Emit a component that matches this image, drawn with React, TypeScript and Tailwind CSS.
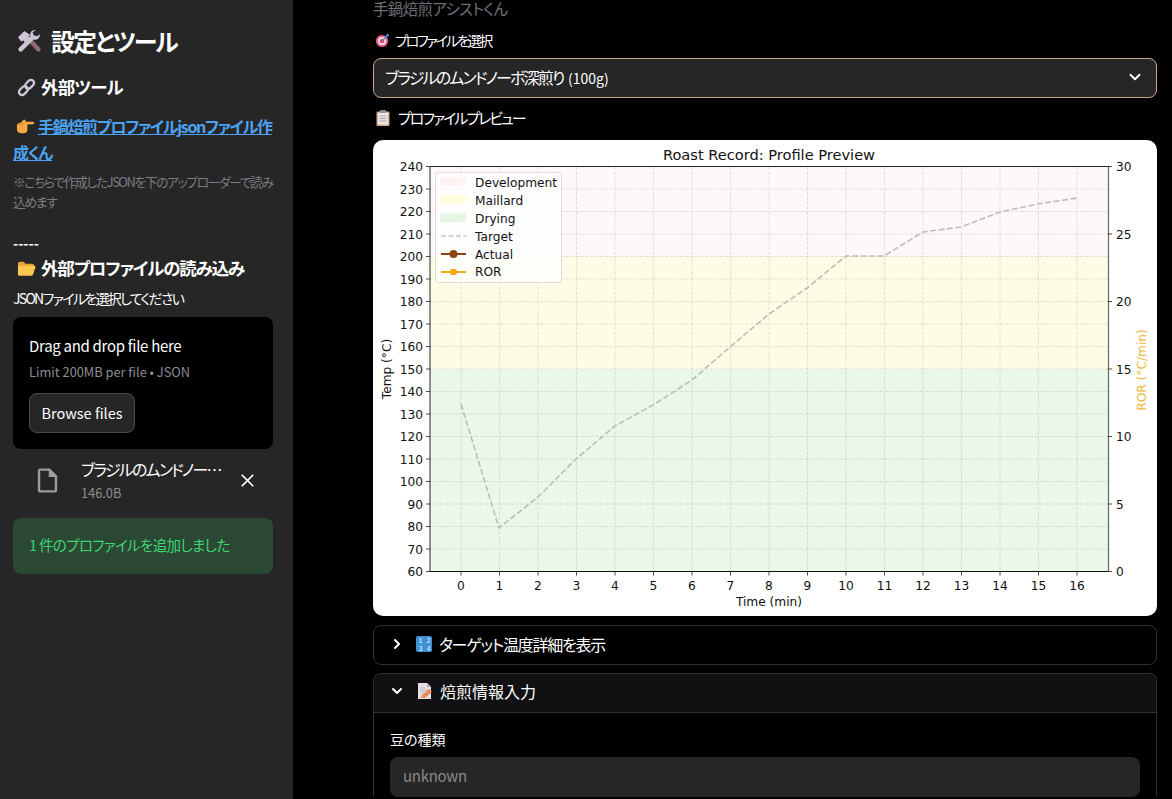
import { ChevronDown, ChevronRight, X } from "lucide-react"

const xTicks = Array.from({ length: 17 }, (_, i) => i)
const tempTicks = Array.from({ length: 19 }, (_, i) => 60 + i * 10)
const rorTicks = [0, 5, 10, 15, 20, 25, 30]

const X0 = 461
const XSTEP = 38.5
const tempY = (t: number) => 571.5 - (t - 60) * 2.25
const rorY = (r: number) => 571.5 - r * 13.5

const target: [number, number][] = [
  [461, 404], [499, 528], [538, 497], [576, 459], [615, 426], [653, 405], [692, 380], [730, 347], [769, 314],
  [807, 288], [846, 256], [884, 256], [923, 232], [961, 227], [1000, 212], [1038, 204], [1077, 198],
]

function ToolsEmoji() {
  return (
    <svg viewBox="0 0 24 24" className="h-[25px] w-[25px]">
      <path d="M9 10l3-3 10 11c1 1 1 2 0 3s-2 1-3 0z" fill="#8e6b74" />
      <path d="M1 8l6-6 6 4-2 1 1 2-4 4-2-2-2 1z" fill="#cdc6d4" />
      <path d="M17 1c-3 0-5 3-4 6L2 18c-1 1-1 2 0 3s2 1 3 0L16 10c3 1 6-1 6-5l-3 2-3-1-1-3 3-2z" fill="#cdc6d4" />
    </svg>
  )
}

function LinkEmoji() {
  return (
    <svg viewBox="0 0 20 20" className="h-[19px] w-[19px]" fill="none" stroke="#cdc6d6" strokeWidth="2.400">
      <rect x="1.500" y="10" width="10.500" height="6.500" rx="3.200" transform="rotate(-45 6.700 13.200)" />
      <rect x="8" y="3.500" width="10.500" height="6.500" rx="3.200" transform="rotate(-45 13.200 6.700)" />
    </svg>
  )
}

function PointEmoji() {
  return (
    <svg viewBox="0 0 20 20" className="h-[19px] w-[19px]">
      <path d="M1 9c0-2 2-3 4-3l3-3 2 0 0 2 8 0c1.500 0 1.500 2 0 2.500l-6 .5 0 6c0 2-2 3-4 3l-3 0c-3 0-4-2-4-4z" fill="#f5a742" />
      <path d="M3 8l6-1" stroke="#d78528" strokeWidth="1" />
    </svg>
  )
}

function FolderEmoji() {
  return (
    <svg viewBox="0 0 20 20" className="h-[19px] w-[19px]">
      <path d="M1 5a2 2 0 0 1 2-2h4l2 2h7a2 2 0 0 1 2 2v1H1z" fill="#e9a33b" />
      <path d="M1 17V8.500a1.500 1.500 0 0 1 1.500-1.500H18a1.500 1.500 0 0 1 1.500 1.500L17 16a2 2 0 0 1-2 1.500H2.500z" fill="#fdc64f" />
    </svg>
  )
}

function TargetEmoji() {
  return (
    <svg viewBox="0 0 16 16" className="h-[15px] w-[15px]">
      <circle cx="7.500" cy="8.500" r="6.500" fill="#e8608a" />
      <circle cx="7.500" cy="8.500" r="4.200" fill="#f6e2e8" />
      <circle cx="7.500" cy="8.500" r="2.400" fill="#d9406f" />
      <path d="M8 8l6-6" stroke="#4a90d9" strokeWidth="1.600" />
      <path d="M12 1l3 .5-1 2.500z" fill="#4aa3e8" />
    </svg>
  )
}

function ClipboardEmoji() {
  return (
    <svg viewBox="0 0 14 16" className="h-[16px] w-[14px]">
      <rect x="0.500" y="1.500" width="13" height="14.500" rx="1" fill="#d9a98c" />
      <rect x="2" y="3" width="10" height="11.500" fill="#ece8ee" />
      <rect x="4" y="0" width="6" height="3" rx="1" fill="#9d8fa0" />
      <path d="M3.500 6h7M3.500 8.500h7M3.500 11h7" stroke="#a49cb0" strokeWidth="1" />
    </svg>
  )
}

function NumbersEmoji() {
  return (
    <svg viewBox="0 0 16 16" className="h-[16px] w-[16px]">
      <rect x="0" y="0" width="16" height="16" rx="2" fill="#3f8fd6" />
      <text x="4" y="7" fontSize="6.500" fill="#fff" textAnchor="middle" fontFamily="Liberation Sans, sans-serif">1</text>
      <text x="12" y="7" fontSize="6.500" fill="#fff" textAnchor="middle" fontFamily="Liberation Sans, sans-serif">2</text>
      <text x="4" y="14.500" fontSize="6.500" fill="#fff" textAnchor="middle" fontFamily="Liberation Sans, sans-serif">3</text>
      <text x="12" y="14.500" fontSize="6.500" fill="#fff" textAnchor="middle" fontFamily="Liberation Sans, sans-serif">4</text>
    </svg>
  )
}

function MemoEmoji() {
  return (
    <svg viewBox="0 0 16 16" className="h-[16px] w-[16px]">
      <path d="M1 0h9l4 4v12H1z" fill="#e6e0e6" />
      <path d="M10 0l4 4h-4z" fill="#b9aeb9" />
      <path d="M3 5h6M3 7.500h8M3 10h4" stroke="#b5aeb8" strokeWidth="0.800" />
      <path d="M4 15l1-3 7-6 3 2.500-7 6.500z" fill="#ef8a55" />
    </svg>
  )
}

function FileIcon() {
  return (
    <svg viewBox="0 0 24 24" className="h-[29px] w-[29px]" fill="#9b9ca1">
      <path d="M14 2H6c-1.100 0-2 .9-2 2v16c0 1.100.9 2 2 2h12c1.100 0 2-.9 2-2V8l-6-6zm4 18H6V4h7v5h5v11z" />
    </svg>
  )
}

function Chart() {
  return (
    <svg viewBox="373 140 784 476" className="block h-[476px] w-[784px]" fontFamily="DejaVu Sans, sans-serif" fontSize="12.200" fill="#111">
      <rect x="430" y="166.500" width="678" height="90" fill="#fff8f8" />
      <rect x="430" y="256.500" width="678" height="112.500" fill="#fffce6" />
      <rect x="430" y="369" width="678" height="202.500" fill="#eaf8ea" />

      {xTicks.map((t) => (
        <line key={t} x1={X0 + t * XSTEP} x2={X0 + t * XSTEP} y1="166.500" y2="571.500" stroke="#9a9a90" strokeOpacity="0.350" strokeWidth="0.800" strokeDasharray="3.500 1.500" />
      ))}
      {tempTicks.map((t) => (
        <line key={t} x1="430" x2="1108" y1={tempY(t)} y2={tempY(t)} stroke="#9a9a90" strokeOpacity="0.350" strokeWidth="0.800" strokeDasharray="3.500 1.500" />
      ))}

      <polyline points={target.map((p) => p.join(",")).join(" ")} fill="none" stroke="#bcbcb8" strokeWidth="1.600" strokeDasharray="6 2.500" />

      <path d="M430 571.500V166.500H1108" fill="none" stroke="#222" strokeWidth="1" />
      <path d="M430 571.500H1108" fill="none" stroke="#111" strokeWidth="1" />
      <line x1="1108.500" x2="1108.500" y1="166.500" y2="571.500" stroke="#666" strokeWidth="1.200" />

      {tempTicks.map((t) => (
        <g key={t}>
          <line x1="426" x2="430" y1={tempY(t)} y2={tempY(t)} stroke="#222" strokeWidth="0.800" />
          <text x="423" y={tempY(t) + 4.500} textAnchor="end">{t}</text>
        </g>
      ))}
      {xTicks.map((t) => (
        <g key={t}>
          <line x1={X0 + t * XSTEP} x2={X0 + t * XSTEP} y1="571.500" y2="575.500" stroke="#222" strokeWidth="0.800" />
          <text x={X0 + t * XSTEP} y="590" textAnchor="middle">{t}</text>
        </g>
      ))}
      {rorTicks.map((r) => (
        <g key={r}>
          <line x1="1108" x2="1112" y1={rorY(r)} y2={rorY(r)} stroke="#222" strokeWidth="0.800" />
          <text x="1116" y={rorY(r) + 4.500}>{r}</text>
        </g>
      ))}

      <text x="769" y="159.500" textAnchor="middle" fontSize="14.600">Roast Record: Profile Preview</text>
      <text x="769" y="606" textAnchor="middle">Time (min)</text>
      <text transform="translate(391 369) rotate(-90)" textAnchor="middle">Temp (°C)</text>
      <text transform="translate(1146 370) rotate(-90)" textAnchor="middle" fill="#f4b942">ROR (°C/min)</text>

      <rect x="435.500" y="172.500" width="126" height="110" rx="3" fill="#ffffff" fillOpacity="0.8" stroke="#dcdcdc" />
      <rect x="440" y="177" width="26" height="9" fill="#fff3f3" />
      <rect x="440" y="195" width="26" height="9" fill="#fdfcdc" />
      <rect x="440" y="213" width="26" height="9" fill="#e6f6e6" />
      <line x1="441" x2="466" y1="236" y2="236" stroke="#c4c4c4" strokeWidth="1.400" strokeDasharray="5 2.500" />
      <line x1="441" x2="466" y1="254" y2="254" stroke="#8b4513" strokeWidth="2" />
      <circle cx="453.500" cy="254" r="4" fill="#8b4513" />
      <line x1="441" x2="466" y1="272" y2="272" stroke="#f5a814" strokeWidth="2" />
      <rect x="450.500" y="269" width="6" height="6" fill="#f5a814" />
      <text x="475" y="187">Development</text>
      <text x="475" y="205">Maillard</text>
      <text x="475" y="223">Drying</text>
      <text x="475" y="240.500">Target</text>
      <text x="475" y="258.500">Actual</text>
      <text x="475" y="276">ROR</text>
    </svg>
  )
}

export default function App() {
  return (
    <div className="flex h-[799px] w-[1172px] overflow-hidden bg-black text-white [font-feature-settings:'palt'] font-['Noto_Sans_CJK_JP','Noto_Sans',sans-serif]">
      <aside className="flex h-full w-[293px] shrink-0 flex-col bg-[#262626] pr-[20px] pl-[13px]">
        <h2 className="mt-[23px] flex h-[36px] items-center gap-[9px] pl-[4px] text-[24px] font-bold tracking-[-2px]">
          <ToolsEmoji />
          <span>設定とツール</span>
        </h2>
        <h3 className="mt-[16px] flex h-[24px] items-center gap-[5px] pl-[4px] text-[17.500px] font-bold tracking-[-0.8px]">
          <LinkEmoji />
          <span>外部ツール</span>
        </h3>
        <p className="mt-[14px] text-[16px] leading-[26px] font-bold tracking-[-1.300px] text-[#4ba3f5]">
          <span className="mr-[3px] inline-block pl-[3px] align-[-3px]"><PointEmoji /></span>
          <a className="underline">手鍋焙煎プロファイルjsonファイル作成くん</a>
        </p>
        <p className="mt-[7px] text-[12.800px] leading-[19.500px] tracking-[-1.400px] text-[#7c7c82]">
          ※こちらで作成したJSONを下のアップローダーで読み込めます
        </p>
        <p className="mt-[22px] text-[14px] leading-[20px] font-bold">-----</p>
        <h3 className="mt-[3px] flex h-[24px] items-center gap-[5px] pl-[4px] text-[17.500px] font-bold tracking-[-1.150px]">
          <FolderEmoji />
          <span>外部プロファイルの読み込み</span>
        </h3>
        <label className="mt-[8px] text-[14px] leading-[20px] tracking-[-1.700px]">JSONファイルを選択してください</label>
        <div className="mt-[9px] flex h-[132px] flex-col rounded-[8px] bg-black px-[16px] pt-[16px]">
          <div className="text-[15px] leading-[26px] tracking-[-0.3px]">Drag and drop file here</div>
          <div className="mt-[3px] text-[12.800px] leading-[20px] text-[#8d8e93]">Limit 200MB per file • JSON</div>
          <button className="mt-[11px] flex h-[40px] w-[106px] items-center justify-center rounded-[8px] border border-[#4a4b50] bg-[#262626] pb-[1px] text-[14.500px]">
            Browse files
          </button>
        </div>
        <div className="mt-[3px] flex h-[56px] items-center pl-[20px]">
          <FileIcon />
          <div className="ml-[19px] w-[153px] min-w-0">
            <div className="truncate text-[16px] leading-[26px] tracking-[-1.800px]">ブラジルのムンドノーボ深煎り.json</div>
            <div className="text-[12.800px] leading-[22px] text-[#8d8e93]">146.0B</div>
          </div>
          <X className="ml-[3px] h-[21px] w-[21px]" strokeWidth={2} />
        </div>
        <div className="mt-[10px] flex h-[56px] items-center rounded-[8px] bg-[#2a4834] px-[16px] pb-[2px] text-[14.500px] tracking-[-0.650px] text-[#3fd673]">
          1 件のプロファイルを追加しました
        </div>
      </aside>

      <main className="ml-[80px] flex w-[784px] shrink-0 flex-col">
        <div className="mt-[-2px] h-[20px] text-[15.500px] leading-[20px] tracking-[-0.7px] text-[#6f7076]">手鍋焙煎アシストくん</div>
        <div className="mt-[10px] flex h-[24px] items-center gap-[5px] pl-[2px] text-[14px] tracking-[-2.200px]">
          <TargetEmoji />
          <span>プロファイルを選択</span>
        </div>
        <div className="mt-[6px] flex h-[40px] items-center justify-between rounded-[8px] border border-[#c9a585] bg-[#262626] pr-[12px] pb-[2px] pl-[11px] text-[16px]">
          <span className="tracking-[-1.850px]">
            ブラジルのムンドノーボ深煎り <span className="ml-[3px] text-[14px] tracking-normal">(100g)</span>
          </span>
          <ChevronDown className="h-[18px] w-[18px]" strokeWidth={2.5} />
        </div>
        <div className="mt-[8px] flex h-[24px] items-center gap-[8px] pl-[3px] text-[15px] tracking-[-2px]">
          <ClipboardEmoji />
          <span>プロファイルプレビュー</span>
        </div>
        <div className="mt-[10px] h-[476px] overflow-hidden rounded-[10px] bg-white">
          <Chart />
        </div>
        <div className="mt-[9px] flex h-[40px] items-center rounded-[8px] border border-[#2f3034] pb-[3px] pl-[15px] text-[16px] tracking-[-1.250px]">
          <ChevronRight className="h-[16px] w-[16px]" strokeWidth={3} />
          <span className="ml-[11px]"><NumbersEmoji /></span>
          <span className="ml-[7px]">ターゲット温度詳細を表示</span>
        </div>
        <div className="mt-[8px] flex flex-col rounded-t-[8px] border border-b-0 border-[#2f3034]">
          <div className="flex h-[39px] items-center rounded-t-[8px] border-b border-[#2f3034] bg-[#111114] pb-[4px] pl-[15px] text-[16px]">
            <ChevronDown className="h-[16px] w-[16px]" strokeWidth={3} />
            <span className="ml-[12px]"><MemoEmoji /></span>
            <span className="ml-[7px]">焙煎情報入力</span>
          </div>
          <div className="px-[16px] pt-[17px]">
            <label className="block h-[20px] pb-[2px] text-[14px] leading-[18px]">豆の種類</label>
            <div className="mt-[7px] flex h-[40px] w-[750px] items-center rounded-[8px] bg-[#262626] px-[13px] pb-[1px] text-[15px] tracking-[-0.3px] text-[#87888c]">
              unknown
            </div>
          </div>
        </div>
      </main>
    </div>
  )
}
